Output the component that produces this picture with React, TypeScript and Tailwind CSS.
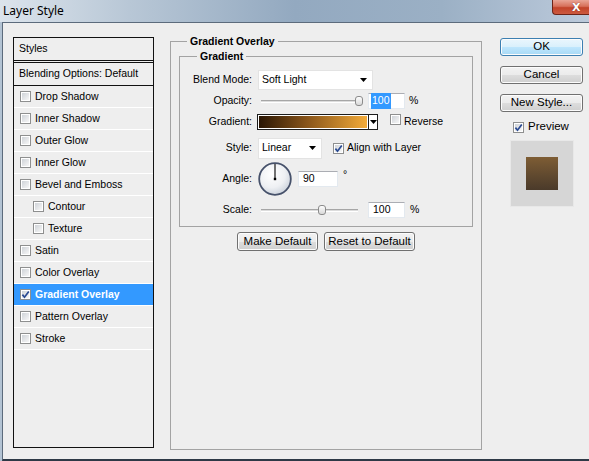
import React from 'react';

type StyleItem = { label: string; sub?: boolean; checked?: boolean; active?: boolean };

const styleItems: StyleItem[] = [
  { label: 'Drop Shadow' },
  { label: 'Inner Shadow' },
  { label: 'Outer Glow' },
  { label: 'Inner Glow' },
  { label: 'Bevel and Emboss' },
  { label: 'Contour', sub: true },
  { label: 'Texture', sub: true },
  { label: 'Satin' },
  { label: 'Color Overlay' },
  { label: 'Gradient Overlay', checked: true, active: true },
  { label: 'Pattern Overlay' },
  { label: 'Stroke' },
];

function Checkbox({ checked = false }: { checked?: boolean }) {
  return (
    <span className="relative inline-flex h-[11px] w-[11px] shrink-0 items-center justify-center border border-[#8e8f8f] bg-white">
      <span className="absolute inset-[1px] bg-gradient-to-br from-[#cfd3d8] to-[#f7f7f7]" />
      {checked && (
        <svg viewBox="0 0 9 9" className="relative h-[9px] w-[9px]">
          <path d="M1.4 4.6 L3.5 7.2 L7.8 1.4" fill="none" stroke="#2a4a92" strokeWidth="1.7" />
        </svg>
      )}
    </span>
  );
}

function DownArrow() {
  return (
    <svg viewBox="0 0 7 4" className="h-[4px] w-[7px]">
      <polygon points="0,0 7,0 3.5,4" fill="#000" />
    </svg>
  );
}

function Select({ value, width, height }: { value: string; width: string; height: string }) {
  return (
    <div className={`ml-[6px] flex items-center justify-between border border-[#e3e3e3] bg-white pl-[3px] pr-[5px] ${width} ${height}`}>
      <span>{value}</span>
      <DownArrow />
    </div>
  );
}

function Slider({ thumb }: { thumb: number }) {
  return (
    <div className="relative ml-[9px] h-[12px] w-[97px]">
      <div className="absolute left-0 right-0 top-[5px] h-[3px] border-t border-[#a6a6a6] border-b border-b-white bg-[#dcdcdc]" />
      <div
        className="absolute top-[1px] h-[10px] w-[8px] rounded-[3px] border border-[#8b8b8b] bg-gradient-to-b from-[#fdfdfd] to-[#d9d9d9]"
        style={{ left: thumb }}
      />
    </div>
  );
}

function TextInput({ children, width, className = '' }: { children: React.ReactNode; width: string; className?: string }) {
  return (
    <div className={`flex h-[16px] items-center border border-[#e3e9ef] border-t-[#abadb3] bg-white pl-[2px] ${width} ${className}`}>
      {children}
    </div>
  );
}

function Button({ children, primary = false, className = '' }: { children: React.ReactNode; primary?: boolean; className?: string }) {
  const skin = primary
    ? 'border-[#3c7fb1] bg-[linear-gradient(#eaf6fd_0%,#d9f0fc_50%,#bee6fd_51%,#a7d9f5_100%)]'
    : 'border-[#707070] bg-[linear-gradient(#f2f2f2_0%,#ebebeb_50%,#dddddd_51%,#cfcfcf_100%)]';
  return (
    <div
      className={`flex items-center justify-center rounded-[3px] border text-[11.5px] shadow-[inset_0_0_0_1px_#fcfcfc] ${skin} ${className}`}
    >
      {children}
    </div>
  );
}

function Row({ label, height, children }: { label: string; height: string; children: React.ReactNode }) {
  return (
    <div className={`flex items-center ${height}`}>
      <span className="w-[72px] text-right">{label}</span>
      {children}
    </div>
  );
}

function AngleDial() {
  return (
    <svg viewBox="0 0 34 34" className="ml-[6px] h-[34px] w-[34px] shrink-0">
      <defs>
        <radialGradient id="dial" cx="40%" cy="35%" r="70%">
          <stop offset="0%" stopColor="#ffffff" />
          <stop offset="60%" stopColor="#eef0f3" />
          <stop offset="100%" stopColor="#c9d0da" />
        </radialGradient>
      </defs>
      <circle cx="17" cy="17" r="15.8" fill="url(#dial)" stroke="#46516a" strokeWidth="1.8" />
      <line x1="17" y1="17" x2="17" y2="2" stroke="#000" strokeWidth="1.1" />
      <rect x="15.8" y="15.8" width="2.4" height="2.4" fill="#000" />
    </svg>
  );
}

function StylesList() {
  return (
    <div className="flex h-[411px] w-[141px] shrink-0 flex-col border border-[#111]">
      <div className="flex h-[25px] items-center border-b-[3px] border-double border-[#111] pl-[5px]">Styles</div>
      <div className="flex h-[23px] items-center border-b border-[#111] pl-[5px]">Blending Options: Default</div>
      {styleItems.map((item) => (
        <div
          key={item.label}
          className={`flex h-[22px] items-center gap-[4px] border-b border-white ${item.sub ? 'pl-[19px]' : 'pl-[6px]'} ${
            item.active ? 'bg-[#3399ff] font-bold text-white' : ''
          }`}
        >
          <Checkbox checked={item.checked} />
          <span>{item.label}</span>
        </div>
      ))}
    </div>
  );
}

function GradientPanel() {
  return (
    <div className="ml-[16px] mt-[-2px] flex w-[312px] shrink-0 flex-col">
      <fieldset className="h-[415px] border border-[#a3a3a3]">
        <legend className="ml-[16px] px-[3px] font-bold leading-[12px]">Gradient Overlay</legend>
        <fieldset className="mx-[8px] mt-[3px] border border-[#a3a3a3] pb-[1px] pt-[7px]">
          <legend className="ml-[17px] px-[3px] font-bold leading-[12px]">Gradient</legend>
          <Row label="Blend Mode:" height="h-[22px]">
            <Select value="Soft Light" width="w-[115px]" height="h-[20px]" />
          </Row>
          <Row label="Opacity:" height="h-[20px]">
            <Slider thumb={94} />
            <TextInput width="w-[37px]" className="ml-[10px]">
              <span className="bg-[#3399ff] px-px text-white">100</span>
            </TextInput>
            <span className="ml-[4px]">%</span>
          </Row>
          <Row label="Gradient:" height="h-[22px]">
            <div className="ml-[5px] flex h-[16px] w-[121px] border border-[#1c1c1c]">
              <div className="flex-1 border border-white bg-[linear-gradient(90deg,#2a1604_0%,#8a561b_45%,#f3ab39_100%)]" />
              <div className="flex w-[9px] items-center justify-center border-l border-[#1c1c1c] bg-white">
                <DownArrow />
              </div>
            </div>
            <span className="ml-[12px]">
              <Checkbox />
            </span>
            <span className="ml-[3px]">Reverse</span>
          </Row>
          <Row label="Style:" height="h-[30px]">
            <Select value="Linear" width="w-[64px]" height="h-[21px]" />
            <span className="ml-[11px] flex">
              <Checkbox checked />
            </span>
            <span className="ml-[3px]">Align with Layer</span>
          </Row>
          <Row label="Angle:" height="h-[32px]">
            <AngleDial />
            <TextInput width="w-[40px]" className="ml-[6px] h-[15px] pl-[4px]">
              90
            </TextInput>
            <span className="ml-[5px] mb-[8px]">°</span>
          </Row>
          <Row label="Scale:" height="h-[30px]">
            <Slider thumb={57} />
            <TextInput width="w-[37px]" className="ml-[10px] pl-[4px]">
              100
            </TextInput>
            <span className="ml-[5px]">%</span>
          </Row>
        </fieldset>
        <div className="mt-[5px] flex justify-center gap-[6px]">
          <Button className="h-[19px] w-[81px]">Make Default</Button>
          <Button className="h-[19px] w-[91px]">Reset to Default</Button>
        </div>
      </fieldset>
    </div>
  );
}

function ActionColumn() {
  return (
    <div className="ml-[18px] mt-[1px] flex w-[83px] shrink-0 flex-col">
      <Button primary className="h-[18px]">OK</Button>
      <Button className="mt-[10px] h-[18px]">Cancel</Button>
      <Button className="mt-[10px] h-[18px]">New Style...</Button>
      <div className="ml-[13px] mt-[9px] flex h-[12px] items-center gap-[4px] text-[11.5px]">
        <Checkbox checked />
        <span>Preview</span>
      </div>
      <div className="ml-[10px] mt-[7px] flex h-[67px] w-[64px] items-center justify-center border border-[#e8e8e8] bg-[#d6d6d6]">
        <div className="h-[33px] w-[32px] bg-gradient-to-b from-[#7e5d34] to-[#4a3a2a]" />
      </div>
    </div>
  );
}

export default function App() {
  return (
    <div className="flex h-[461px] w-[589px] flex-col overflow-hidden bg-[#b3c3d3] font-['Liberation_Sans',Arial,sans-serif] text-[10.5px] text-black">
      {/* title bar */}
      <div className="flex h-[22px] shrink-0 items-start justify-between bg-[linear-gradient(90deg,#dce4ec_0%,#b8c7d6_22%,#93a9c0_50%,#9bb0c5_75%,#bccadb_100%)]">
        <span className="pl-[3px] pt-[3px] font-['Noto_Sans',sans-serif] text-[12px] leading-[16px]">Layer Style</span>
        <div className="flex h-[15px] w-[37px] items-center rounded-bl-[4px] border-b border-l border-[#6d2418] bg-[linear-gradient(#e9a596_0%,#d7705b_45%,#c2432a_55%,#cc5a40_100%)] pl-[19px]">
          <span className="font-['DejaVu_Sans',sans-serif] text-[11px] font-bold leading-none text-white [text-shadow:0_0_1px_#5a1a10]">X</span>
        </div>
      </div>
      {/* dialog body */}
      <div className="ml-[2px] flex flex-1 border-b-2 border-l border-t border-[#5c6b7c] border-b-[#2e3946] bg-[#eeeeee] pl-[10px] pt-[14px]">
        <StylesList />
        <GradientPanel />
        <ActionColumn />
      </div>
    </div>
  );
}
